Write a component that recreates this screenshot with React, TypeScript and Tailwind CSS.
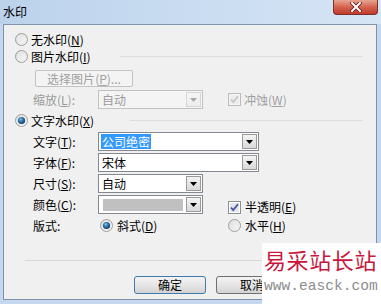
import React from 'react'

const Radio = ({ on = false, dim = false }: { on?: boolean; dim?: boolean }) => (
  <svg width="13" height="13" viewBox="0 0 13 13" className="shrink-0">
    <defs>
      <linearGradient id="rfill" x1="0" y1="0" x2="1" y2="1">
        <stop offset="0" stopColor="#dcdcdc" />
        <stop offset="1" stopColor="#fbfbfb" />
      </linearGradient>
      <radialGradient id="rdot" cx="0.4" cy="0.35" r="0.7">
        <stop offset="0" stopColor="#8fc3e6" />
        <stop offset="0.45" stopColor="#2f73a8" />
        <stop offset="1" stopColor="#153a5e" />
      </radialGradient>
    </defs>
    <circle cx="6.5" cy="6.5" r="6" fill="url(#rfill)" stroke={dim ? '#c4c4c4' : '#9d9d9d'} />
    <circle cx="6.5" cy="6.5" r="4.2" fill="none" stroke="#e9e9e9" />
    {on && <circle cx="6.5" cy="6.5" r="3.6" fill="url(#rdot)" />}
  </svg>
)

const Check = ({ on = false, dim = false }: { on?: boolean; dim?: boolean }) => (
  <svg width="13" height="13" viewBox="0 0 13 13" className="shrink-0">
    <rect x="0.5" y="0.5" width="12" height="12" fill={dim ? '#f4f4f4' : '#ffffff'} stroke={dim ? '#bcbcbc' : '#8e8f8f'} />
    <rect x="2" y="2" width="9" height="9" fill={dim ? '#eeeeee' : '#e3e6ea'} />
    {on && (
      <path
        d="M3 6.5 L5.2 9 L10 3.2"
        fill="none"
        stroke={dim ? '#c6c6c6' : '#44539c'}
        strokeWidth="1.8"
      />
    )}
  </svg>
)

const Arrow = ({ dim = false }: { dim?: boolean }) => (
  <svg width="7" height="4" viewBox="0 0 7 4">
    <path d="M0 0 H7 L3.5 4 Z" fill={dim ? '#a8a8a8' : '#000'} />
  </svg>
)

const Combo = ({
  w,
  children,
  dim = false,
}: {
  w: string
  children?: React.ReactNode
  dim?: boolean
}) => (
  <div
    className={`flex h-[19px] ${w} border p-[1px] ${
      dim ? 'border-[#c2c2c2] bg-[#f4f4f4]' : 'border-[#828790] bg-white'
    }`}
  >
    <div className="flex flex-1 items-center overflow-hidden">{children}</div>
    <div
      className={`flex w-[15px] items-center justify-center border bg-gradient-to-b ${
        dim
          ? 'border-[#d6d6d6] from-[#f6f6f6] to-[#ececec]'
          : 'border-[#9a9a9a] from-[#f4f4f4] to-[#d9d9d9]'
      }`}
    >
      <Arrow dim={dim} />
    </div>
  </div>
)

const Key = ({ k }: { k: string }) => (
  <>
    (<span className="underline underline-offset-1">{k}</span>)
  </>
)

export default function App() {
  return (
    <div className="relative flex h-[304px] w-[381px] flex-col overflow-hidden bg-[#c4d7ee] font-['Noto_Sans_CJK_SC',sans-serif] text-[12px] leading-none text-black">
      {/* title bar */}
      <div className="flex h-[24px] justify-between bg-gradient-to-r from-[#bcd2ec] via-[#c9dcf1] to-[#d6e5f5]">
        <span className="pl-[3px] pt-[6px] text-[12px]">水印</span>
        <div className="mr-[3px] flex h-[15px] w-[45px] items-center justify-center rounded-b-[4px] border border-t-0 border-[#7d2f28] bg-gradient-to-b from-[#e7a493] via-[#d3634f] to-[#c0392a]">
          <svg width="12" height="10" viewBox="0 0 12 10">
            <path d="M2 1 L10 9 M10 1 L2 9" stroke="#5a1a12" strokeWidth="3.6" strokeLinecap="square" />
            <path d="M2 1 L10 9 M10 1 L2 9" stroke="#ffffff" strokeWidth="2" strokeLinecap="square" />
          </svg>
        </div>
      </div>

      {/* body */}
      <div className="ml-[3px] mr-[4px] flex h-[276px] flex-col border border-[#7e92a9] bg-[#f0f0f0] pt-[6px]">
        <div className="ml-[11px] flex h-[17px] items-center gap-[3px]">
          <Radio />
          <span>
            无水印<Key k="N" />
          </span>
        </div>
        <div className="ml-[11px] flex h-[17px] items-center gap-[3px]">
          <Radio />
          <span>
            图片水印<Key k="I" />
          </span>
          <div className="ml-[26px] mr-[13px] h-px flex-1 bg-[#d9dde2]" />
        </div>
        <div className="ml-[31px] mt-[5px] flex h-[17px] w-[98px] items-center justify-center rounded-[2px] border border-[#c3c3c3] bg-[#f4f4f4] text-[#a0a0a0]">
          选择图片<Key k="P" />...
        </div>
        <div className="ml-[29px] mt-[3px] flex h-[19px] items-center">
          <span className="w-[65px] text-[#9a9a9a]">
            缩放<Key k="L" />:
          </span>
          <Combo w="w-[105px]" dim>
            <span className="pl-[2px] text-[#9a9a9a]">自动</span>
          </Combo>
          <div className="ml-[25px] flex items-center gap-[3px] text-[#a0a0a0]">
            <Check on dim />
            <span>
              冲蚀<Key k="W" />
            </span>
          </div>
        </div>
        <div className="ml-[11px] mt-[3px] flex h-[17px] items-center gap-[3px]">
          <Radio on />
          <span>
            文字水印<Key k="X" />
          </span>
          <div className="ml-[33px] mr-[13px] h-px flex-1 bg-[#d9dde2]" />
        </div>
        <div className="ml-[29px] mt-[3px] flex h-[19px] items-center">
          <span className="w-[65px]">
            文字<Key k="T" />:
          </span>
          <Combo w="w-[161px]">
            <span className="ml-[1px] bg-[#3399ff] px-[1px] py-[2px] text-white">公司绝密</span>
          </Combo>
        </div>
        <div className="ml-[29px] mt-[2px] flex h-[19px] items-center">
          <span className="w-[65px]">
            字体<Key k="F" />:
          </span>
          <Combo w="w-[161px]">
            <span className="pl-[2px]">宋体</span>
          </Combo>
        </div>
        <div className="ml-[29px] mt-[2px] flex h-[19px] items-center">
          <span className="w-[65px]">
            尺寸<Key k="S" />:
          </span>
          <Combo w="w-[105px]">
            <span className="pl-[2px]">自动</span>
          </Combo>
        </div>
        <div className="ml-[29px] mt-[2px] flex h-[19px] items-center">
          <span className="w-[65px]">
            颜色<Key k="C" />:
          </span>
          <Combo w="w-[105px]">
            <div className="mx-[3px] h-[12px] flex-1 bg-[#c0c0c0]" />
          </Combo>
          <div className="ml-[25px] mt-[5px] flex items-center gap-[4px]">
            <Check on />
            <span>
              半透明<Key k="E" />
            </span>
          </div>
        </div>
        <div className="ml-[29px] mt-[3px] flex h-[17px] items-center">
          <span className="w-[67px]">版式:</span>
          <div className="flex w-[128px] items-center gap-[4px]">
            <Radio on />
            <span>
              斜式<Key k="D" />
            </span>
          </div>
          <div className="flex items-center gap-[4px]">
            <Radio />
            <span>
              水平<Key k="H" />
            </span>
          </div>
        </div>
        <div className="ml-[21px] mr-[20px] mt-[26px] h-px bg-[#d6d9dd]" />
        <div className="ml-[130px] mt-[15px] flex gap-[10px]">
          <button className="flex h-[18px] w-[72px] items-center justify-center rounded-[3px] border border-[#3d7bad] bg-gradient-to-b from-[#f3f3f3] via-[#e6e6e6] to-[#d3d3d3] text-[12px]">
            确定
          </button>
          <button className="flex h-[18px] w-[72px] items-center justify-center rounded-[3px] border border-[#707070] bg-gradient-to-b from-[#f3f3f3] via-[#e6e6e6] to-[#d3d3d3] text-[12px]">
            取消
          </button>
        </div>
      </div>

      {/* site watermark over the corner */}
      <div className="absolute left-[262px] top-[243px] flex h-[61px] w-[119px] flex-col bg-white pl-[2px] pt-[5px]">
        <span className="text-[22px] leading-none tracking-[0.6px] text-[#c8173d]">易采站长站</span>
        <span className="mt-[9px] font-['Liberation_Mono',monospace] text-[14.6px] leading-none text-[#8d8d8d]">
          www.easck.com
        </span>
      </div>
    </div>
  )
}
